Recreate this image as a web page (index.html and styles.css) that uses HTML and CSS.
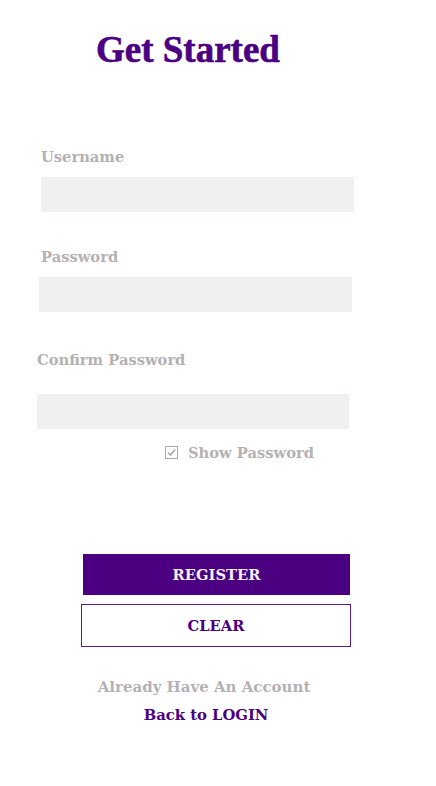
FILE: index.html
```html
<!DOCTYPE html>
<html>
<head>
<meta charset="utf-8">
<link rel="stylesheet" href="styles.css">
</head>
<body>
<div class="page">
  <h1 class="title">Get Started</h1>
  <div class="field f1">
    <label class="label">Username</label>
    <div class="input"></div>
  </div>
  <div class="field f2">
    <label class="label">Password</label>
    <div class="input"></div>
  </div>
  <div class="field f3">
    <label class="label">Confirm Password</label>
    <div class="input"></div>
  </div>
  <div class="show">
    <svg class="check" width="13" height="13" viewBox="0 0 13 13"><rect x="0.5" y="0.5" width="12" height="12" fill="#fff" stroke="#a8a8a8"/><path d="M3 6.5 L5.5 9 L10 3.5" fill="none" stroke="#a8a8a8" stroke-width="1.6"/></svg>
    <span>Show Password</span>
  </div>
  <div class="buttons">
    <div class="btn register">REGISTER</div>
    <div class="btn clear">CLEAR</div>
  </div>
  <div class="already">Already Have An Account</div>
  <div class="back">Back to LOGIN</div>
</div>
</body>
</html>
```
FILE: styles.css
```css
html, body { margin: 0; padding: 0; background: #fff; }
.page {
  width: 436px;
  font-family: "DejaVu Serif", serif;
  display: flex;
  flex-direction: column;
}
.title {
  margin: 30px 0 0 96px;
  font-family: "Liberation Serif", serif;
  font-size: 37px;
  font-weight: bold;
  color: #4b0082;
  line-height: 40px;
  -webkit-text-stroke: 0.6px #4b0082;
}
.field { display: flex; flex-direction: column; }
.label {
  font-size: 14.7px;
  font-weight: bold;
  color: #b4b1b4;
  line-height: 18px;
}
.input { background: #eff0f0; height: 35px; width: 313px; }
.f1 { margin: 78px 0 0 41px; }
.f1 .label { margin-bottom: 11px; }
.f2 { margin: 36px 0 0 39px; }
.f2 .label { margin-left: 2px; margin-bottom: 11px; }
.f3 { margin: 39px 0 0 37px; }
.f3 .label { margin-bottom: 25px; }
.f3 .input { width: 312px; }
.show {
  margin: 15px 0 0 165px;
  display: flex;
  align-items: center;
  gap: 10px;
  font-size: 14.7px;
  font-weight: bold;
  color: #b4b1b4;
}
.buttons { margin: 93px 0 0 81px; display: flex; flex-direction: column; width: 270px; }
.btn {
  display: flex; align-items: center; justify-content: center;
  font-size: 14.7px; font-weight: bold;
}
.register { margin-left: 2px; width: 267px; height: 41px; background: #4b0082; color: #f4f0f4; }
.clear { margin-top: 9px; height: 41px; border: 1px solid #5a1a9a; color: #4b0082; }
.already { margin-top: 31px; text-align: center; width: 408px; font-size: 15px; font-weight: bold; color: #b4b1b4; line-height: 18px; }
.back { margin-top: 10px; text-align: center; width: 412px; font-size: 14.8px; font-weight: bold; color: #4b0082; line-height: 18px; }
```
